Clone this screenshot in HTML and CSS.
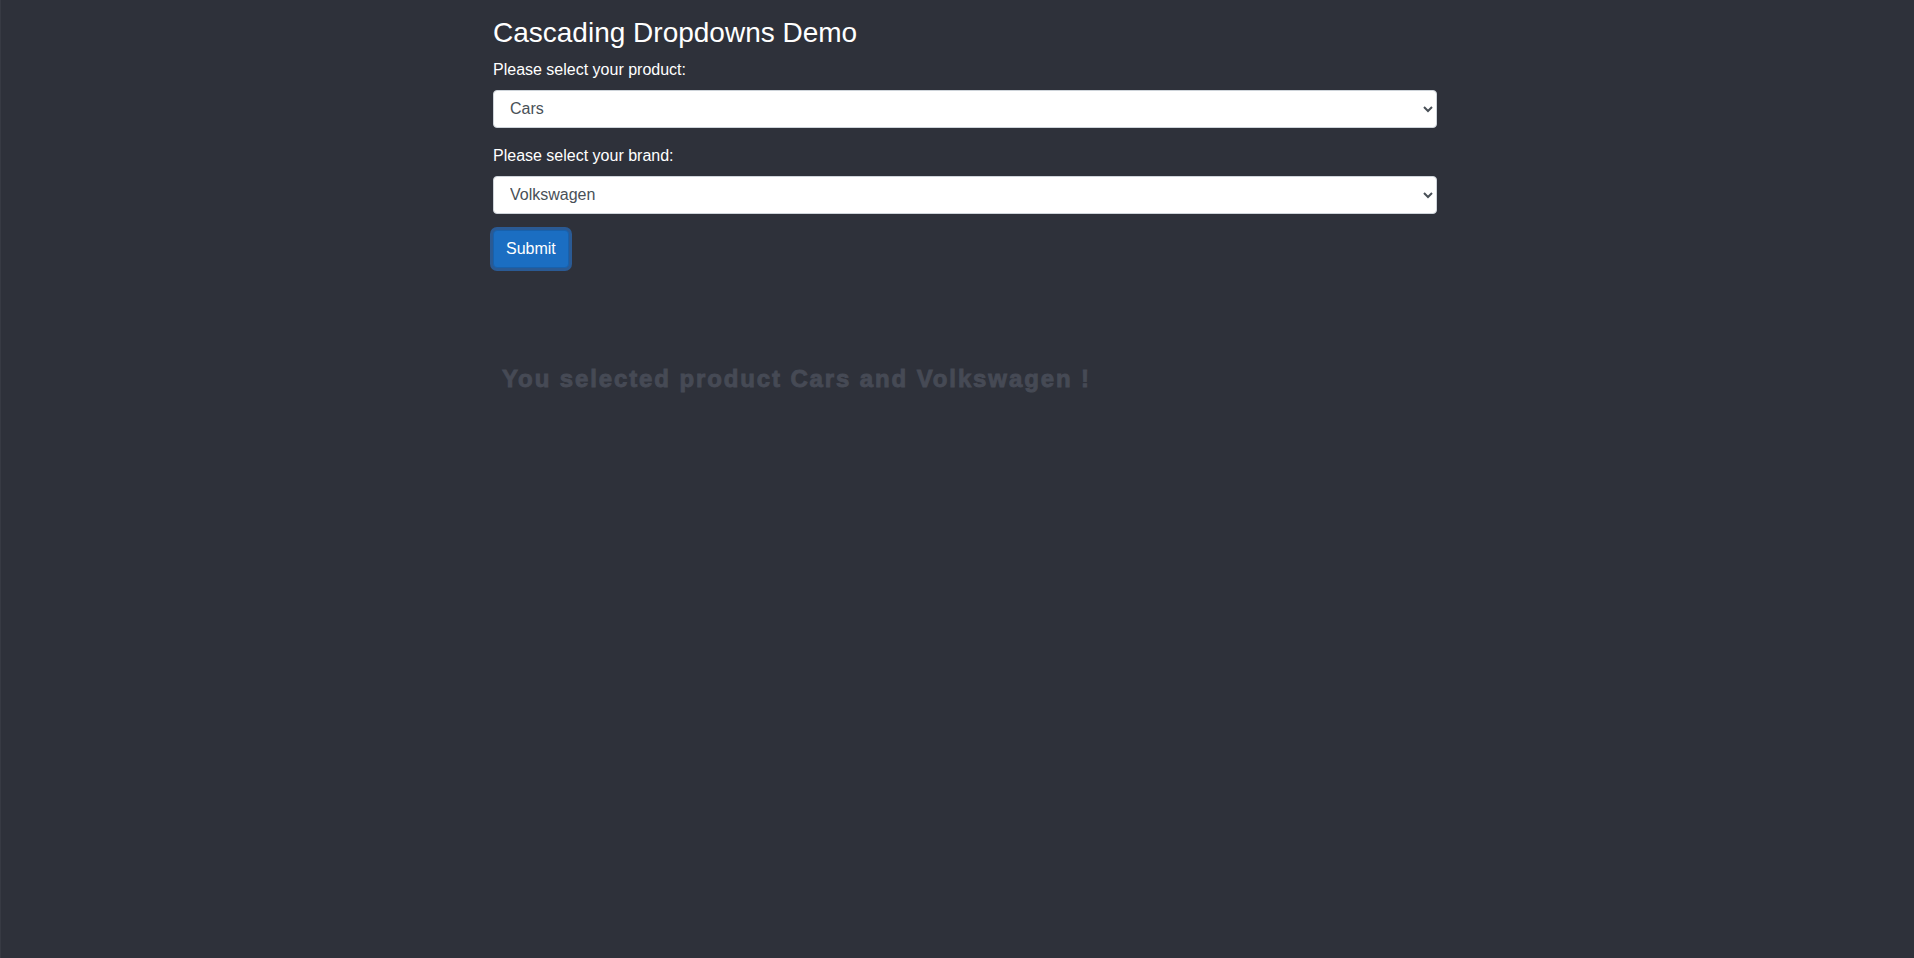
FILE: index.html
```html
<!DOCTYPE html>
<html lang="en">

<head>
    <meta charset="UTF-8">
    <meta name="viewport" content="width=device-width, initial-scale=1.0">
    <title>Cascading Dropdowns Demo</title>
    <link rel="stylesheet" href="styles.css">
</head>

<body>
    <div class="page">
        <div class="content">
            <h3>Cascading Dropdowns Demo</h3>

            <div class="form-group">
                <label class="form-label" for="product">Please select your product:</label>
                <select id="product" class="form-control">
                    <option>Cars</option>
                    <option>Bikes</option>
                    <option>Trucks</option>
                </select>
            </div>

            <div class="form-group">
                <label class="form-label" for="brand">Please select your brand:</label>
                <select id="brand" class="form-control">
                    <option>Volkswagen</option>
                    <option>BMW</option>
                    <option>Audi</option>
                </select>
            </div>

            <button class="btn btn-primary focused" type="button">Submit</button>

            <!-- result message -->
            <div class="result">You selected product Cars and Volkswagen !</div>
        </div>
    </div>
</body>

</html>
```

FILE: styles.css
```css
 body {
     font-family: "Liberation Sans", Arial, sans-serif;
     font-size: 16px;
     line-height: 1.5;
     background-color: #2e313a;
     color: #fff;
     margin: 0;
     padding: 0;
 }

 .page {
     min-height: 958px;
     border-left: 1px solid #373a43;
 }

 .content {
     width: 944px;
     padding-left: 492px;
     padding-top: 16px;
 }

 h3 {
     font-size: 28px;
     font-weight: normal;
     line-height: 1.2;
     margin: 0 0 8px 0;
 }

 .form-group {
     margin-bottom: 16px;
 }

 .form-label {
     display: inline-block;
     margin-bottom: 8px;
 }

 .form-control {
     display: block;
     width: 100%;
     height: 38px;
     padding: 6px 12px;
     font-family: inherit;
     font-size: 16px;
     line-height: 1.5;
     color: #495057;
     background-color: #fff;
     border: 1px solid #ced4da;
     border-radius: 4px;
     box-sizing: border-box;
 }

 .btn {
     display: inline-block;
     font-family: inherit;
     font-size: 16px;
     line-height: 1.5;
     padding: 6px 12px;
     border: 1px solid transparent;
     border-radius: 4px;
     cursor: pointer;
 }

 .btn-primary {
     color: #fff;
     background-color: #1b6ec2;
     border-color: #1861ac;
 }

 .btn-primary.focused {
     box-shadow: 0 0 0 3px #2a5a94;
 }

 .result {
     margin-top: 97px;
     padding-left: 9px;
     font-size: 24px;
     font-weight: bold;
     letter-spacing: 1.88px;
     -webkit-text-stroke: 0.9px #464a55;
     line-height: 1.2;
     color: #464a55;
 }
```
